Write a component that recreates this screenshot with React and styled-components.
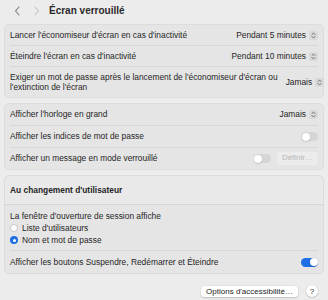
import styled, { createGlobalStyle } from "styled-components";

const GlobalStyle = createGlobalStyle`
  html, body {
    margin: 0;
    padding: 0;
    background: #ececec;
  }
  body {
    font-family: "Liberation Sans", "Noto Sans", Arial, sans-serif;
    color: #262626;
    -webkit-font-smoothing: antialiased;
  }
`;

const Page = styled.div`
  width: 328px;
  height: 300px;
  box-sizing: border-box;
  padding: 0 4px;
  display: flex;
  flex-direction: column;
  overflow: hidden;
`;

const Header = styled.div`
  height: 24px;
  display: flex;
  align-items: center;
  padding-left: 4px;
  padding-bottom: 3px;
  box-sizing: border-box;
`;

const NavButton = styled.span`
  width: 19px;
  display: flex;
  align-items: center;
  justify-content: center;
  color: ${({ $disabled }) => ($disabled ? "#c4c4c4" : "#7a7a7a")};
`;

const Title = styled.h1`
  margin: 0 0 0 3px;
  font-size: 10px;
  font-weight: bold;
  color: #2a2a2a;
`;

const Card = styled.div`
  background: #e5e5e5;
  border: 1px solid #dcdcdc;
  border-radius: 5px;
  margin-bottom: 5px;
  display: flex;
  flex-direction: column;
`;

const Row = styled.div`
  display: flex;
  align-items: center;
  justify-content: space-between;
  gap: 8px;
  min-height: ${({ $h }) => $h || 21}px;
  margin: 0 5px;
  font-size: 8.4px;
  line-height: 10.5px;
  border-bottom: ${({ $last }) => ($last ? "none" : "1px solid #d8d8d8")};
  box-sizing: border-box;
`;

const Label = styled.span`
  flex: 1;
  white-space: nowrap;
`;

const Right = styled.div`
  display: flex;
  align-items: center;
  gap: 6px;
  flex-shrink: 0;
`;

const Popup = styled.span`
  display: flex;
  align-items: center;
  gap: 3px;
  white-space: nowrap;
`;

const Stepper = styled.span`
  width: 9px;
  height: 9px;
  border-radius: 2px;
  background: #d9d9d9;
  display: flex;
  align-items: center;
  justify-content: center;
`;

const Toggle = styled.span`
  position: relative;
  width: 17px;
  height: 9px;
  border-radius: 5px;
  background: ${({ $on }) => ($on ? "#1f6fe5" : "#d6d6d6")};
  display: inline-block;

  &::after {
    content: "";
    position: absolute;
    top: 0.5px;
    left: ${({ $on }) => ($on ? "8.5px" : "0.5px")};
    width: 8px;
    height: 8px;
    border-radius: 50%;
    background: #fff;
    box-shadow: 0 0.5px 1px rgba(0, 0, 0, 0.25);
  }
`;

const SmallButton = styled.span`
  font-size: 8px;
  padding: 1px 5px;
  border-radius: 3px;
  background: ${({ $disabled }) => ($disabled ? "#ececec" : "#fff")};
  color: ${({ $disabled }) => ($disabled ? "#b5b5b5" : "#262626")};
  box-shadow: ${({ $disabled }) => ($disabled ? "none" : "0 0.5px 1.5px rgba(0,0,0,0.3)")};
  white-space: nowrap;
`;

const SectionTitle = styled.div`
  height: 28px;
  display: flex;
  align-items: center;
  padding: 0 5px;
  font-size: 8.4px;
  font-weight: bold;
  background: #e9e9e9;
  border-bottom: 1px solid #d6d6d6;
  border-radius: 5px 5px 0 0;
`;

const RadioGroup = styled.div`
  display: flex;
  flex-direction: column;
  padding: 5px 0 4px;
  margin: 0 5px;
  font-size: 8.4px;
  line-height: 12px;
  border-bottom: 1px solid #d8d8d8;
`;

const RadioItem = styled.label`
  display: flex;
  align-items: center;
  gap: 4px;
`;

const Radio = styled.span`
  width: 8px;
  height: 8px;
  border-radius: 50%;
  box-sizing: border-box;
  background: ${({ $checked }) => ($checked ? "#1f6fe5" : "#fff")};
  border: ${({ $checked }) => ($checked ? "none" : "0.5px solid #c8c8c8")};
  display: flex;
  align-items: center;
  justify-content: center;

  &::after {
    content: "";
    width: 3px;
    height: 3px;
    border-radius: 50%;
    background: ${({ $checked }) => ($checked ? "#fff" : "transparent")};
  }
`;

const Footer = styled.div`
  display: flex;
  justify-content: flex-end;
  align-items: center;
  gap: 8px;
  padding: 6px 6px 0 0;
`;

const Help = styled.span`
  width: 12px;
  height: 12px;
  border-radius: 50%;
  background: #fff;
  box-shadow: 0 0.5px 1.5px rgba(0, 0, 0, 0.3);
  font-size: 8px;
  display: flex;
  align-items: center;
  justify-content: center;
`;

const Chevron = ({ dir }) => (
  <svg width="7" height="10" viewBox="0 0 7 10">
    <path
      d={dir === "left" ? "M5 1 L1.5 5 L5 9" : "M2 1 L5.5 5 L2 9"}
      fill="none"
      stroke="currentColor"
      strokeWidth="1.1"
      strokeLinecap="round"
      strokeLinejoin="round"
    />
  </svg>
);

const StepIcon = () => (
  <Stepper>
    <svg width="5" height="7" viewBox="0 0 5 7">
      <path
        d="M1 2.5 L2.5 1 L4 2.5 M1 4.5 L2.5 6 L4 4.5"
        fill="none"
        stroke="#555"
        strokeWidth="0.8"
        strokeLinecap="round"
        strokeLinejoin="round"
      />
    </svg>
  </Stepper>
);

const PopupValue = ({ children }) => (
  <Popup>
    {children}
    <StepIcon />
  </Popup>
);

export default function App() {
  return (
    <>
      <GlobalStyle />
      <Page>
        <Header>
          <NavButton><Chevron dir="left" /></NavButton>
          <NavButton $disabled><Chevron dir="right" /></NavButton>
          <Title>Écran verrouillé</Title>
        </Header>

        <Card>
          <Row>
            <Label>Lancer l'économiseur d'écran en cas d'inactivité</Label>
            <PopupValue>Pendant 5 minutes</PopupValue>
          </Row>
          <Row>
            <Label>Éteindre l'écran en cas d'inactivité</Label>
            <PopupValue>Pendant 10 minutes</PopupValue>
          </Row>
          <Row $h={30} $last>
            <Label>
              Exiger un mot de passe après le lancement de l'économiseur d'écran ou
              <br />
              l'extinction de l'écran
            </Label>
            <PopupValue>Jamais</PopupValue>
          </Row>
        </Card>

        <Card>
          <Row $h={22}>
            <Label>Afficher l'horloge en grand</Label>
            <PopupValue>Jamais</PopupValue>
          </Row>
          <Row $h={22}>
            <Label>Afficher les indices de mot de passe</Label>
            <Toggle />
          </Row>
          <Row $h={21} $last>
            <Label>Afficher un message en mode verrouillé</Label>
            <Right>
              <Toggle />
              <SmallButton $disabled>Définir…</SmallButton>
            </Right>
          </Row>
        </Card>

        <Card>
          <SectionTitle>Au changement d'utilisateur</SectionTitle>
          <RadioGroup>
            <span>La fenêtre d'ouverture de session affiche</span>
            <RadioItem>
              <Radio />
              Liste d'utilisateurs
            </RadioItem>
            <RadioItem>
              <Radio $checked />
              Nom et mot de passe
            </RadioItem>
          </RadioGroup>
          <Row $h={22} $last>
            <Label>Afficher les boutons Suspendre, Redémarrer et Éteindre</Label>
            <Toggle $on />
          </Row>
        </Card>

        <Footer>
          <SmallButton>Options d'accessibilité…</SmallButton>
          <Help>?</Help>
        </Footer>
      </Page>
    </>
  );
}
